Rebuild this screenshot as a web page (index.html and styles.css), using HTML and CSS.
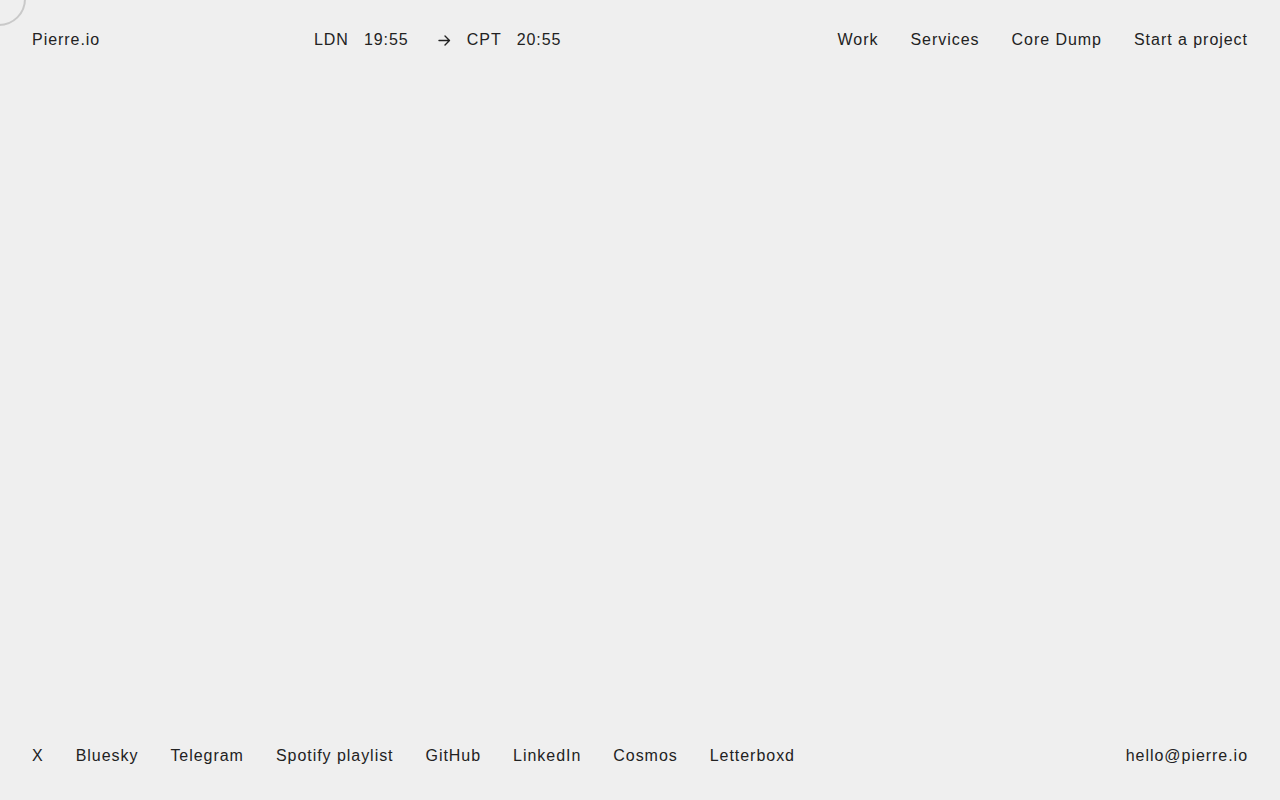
FILE: index.html
```html
<!DOCTYPE html>
<html lang="en">
<head>
<meta charset="utf-8">
<title>Pierre.io</title>
<link rel="stylesheet" href="styles.css">
</head>
<body>
<div class="cursor"></div>
<div class="page">
  <header class="top">
    <a class="logo" href="#">Pierre.io</a>
    <div class="clocks">
      <span class="city">LDN</span>
      <span class="time">19:55</span>
      <span class="arrow">
        <svg width="13" height="11" viewBox="0 0 13 11" fill="none" stroke="currentColor" stroke-width="1.4" stroke-linecap="round" stroke-linejoin="round"><path d="M1 5.5h10.5M7 1l4.5 4.5L7 10"/></svg>
      </span>
      <span class="city">CPT</span>
      <span class="time">20:55</span>
    </div>
    <nav class="nav">
      <a href="#">Work</a>
      <a href="#">Services</a>
      <a href="#">Core Dump</a>
      <a href="#">Start a project</a>
    </nav>
  </header>
  <main class="content"></main>
  <footer class="bottom">
    <nav class="social">
      <a href="#">X</a>
      <a href="#">Bluesky</a>
      <a href="#">Telegram</a>
      <a href="#">Spotify playlist</a>
      <a href="#">GitHub</a>
      <a href="#">LinkedIn</a>
      <a href="#">Cosmos</a>
      <a href="#">Letterboxd</a>
    </nav>
    <a class="mail" href="#">hello@pierre.io</a>
  </footer>
</div>
</body>
</html>
```

FILE: styles.css
```css
* { box-sizing: border-box; }

html, body {
  margin: 0;
  height: 100%;
}

body {
  background: #efefef;
  color: #222222;
  font-family: "Liberation Sans", Arial, sans-serif;
  font-size: 16px;
  letter-spacing: 0.06em;
  overflow: hidden;
}

a {
  color: inherit;
  text-decoration: none;
}

.cursor {
  position: fixed;
  top: -28px;
  left: -28px;
  width: 54px;
  height: 54px;
  border: 2px solid #c9c9c9;
  border-radius: 50%;
  pointer-events: none;
}

.page {
  height: 100%;
  display: flex;
  flex-direction: column;
  padding: 0 32px;
}

.top {
  display: grid;
  grid-template-columns: 282px auto 1fr auto;
  align-items: center;
  height: 80px;
}

.clocks {
  display: flex;
  align-items: center;
}

.clocks .time { margin-left: 15px; }
.clocks .arrow {
  display: flex;
  margin: 0 16px 0 29px;
}

.nav {
  grid-column: 4;
  display: flex;
  gap: 32px;
}

.content { flex: 1; }

.bottom {
  display: flex;
  justify-content: space-between;
  align-items: center;
  height: 88px;
}

.social {
  display: flex;
  gap: 32px;
}
```
